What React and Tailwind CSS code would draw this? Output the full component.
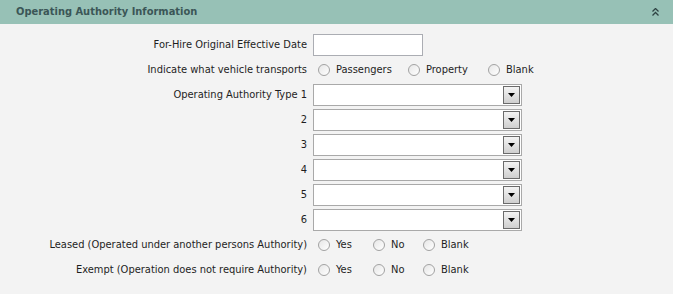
import React from 'react';

const Radio = ({ label, gap = 'w-[70px]' }) => (
    <label className={`flex items-center gap-[6px] ${gap}`}>
        <span className="w-[12px] h-[12px] rounded-full border border-[#a2a2a2] bg-gradient-to-br from-[#e6e6e6] to-white shrink-0"></span>
        <span>{label}</span>
    </label>
);

const Select = () => (
    <div className="w-[209px] h-[22px] border border-[#a9a9a9] bg-white flex items-center justify-end pr-[1px]">
        <div className="w-[17px] h-[18px] border border-[#6b6b6b] bg-gradient-to-b from-[#f4f4f4] to-[#cfcfcf] flex items-center justify-center">
            <svg width="7" height="4" viewBox="0 0 7 4">
                <path d="M0 0h7L3.5 4z" fill="#000" />
            </svg>
        </div>
    </div>
);

const Row = ({ label, children, inset = false }) => (
    <div className="flex items-center h-[22px]">
        <div className="w-[307px] text-right shrink-0 whitespace-nowrap">{label}</div>
        <div className={`flex items-center ${inset ? 'pl-[11px]' : 'pl-[6px]'}`}>{children}</div>
    </div>
);

export default function App() {
    return (
        <div className="w-[673px] h-[294px] bg-[#f3f3f3] text-[11px] text-[#1e1e1e]" style={{ fontFamily: '"DejaVu Sans Condensed", "DejaVu Sans", sans-serif' }}>
            {/* Section header */}
            <div className="h-[24px] bg-[#97c1b6] flex items-center justify-between pl-[16px] pr-[12px]">
                <span className="font-bold text-[#3b5656] text-[11px]">Operating Authority Information</span>
                <svg width="7" height="8" viewBox="0 0 7 8" className="mr-[2px]">
                    <path d="M0.5 3.5L3.5 0.5L6.5 3.5M0.5 7.5L3.5 4.5L6.5 7.5" fill="none" stroke="#2f4444" strokeWidth="1.3" />
                </svg>
            </div>

            <div className="pt-[10px] flex flex-col gap-[3px]">
                <Row label="For-Hire Original Effective Date">
                    <div className="w-[110px] h-[22px] border border-[#abadb3] bg-white"></div>
                </Row>
                <Row label="Indicate what vehicle transports" inset>
                    <Radio label="Passengers" gap="w-[90px]" />
                    <Radio label="Property" gap="w-[80px]" />
                    <Radio label="Blank" />
                </Row>
                <Row label="Operating Authority Type 1"><Select /></Row>
                <Row label="2"><Select /></Row>
                <Row label="3"><Select /></Row>
                <Row label="4"><Select /></Row>
                <Row label="5"><Select /></Row>
                <Row label="6"><Select /></Row>
                <Row label="Leased (Operated under another persons Authority)" inset>
                    <Radio label="Yes" gap="w-[55px]" />
                    <Radio label="No" gap="w-[50px]" />
                    <Radio label="Blank" />
                </Row>
                <Row label="Exempt (Operation does not require Authority)" inset>
                    <Radio label="Yes" gap="w-[55px]" />
                    <Radio label="No" gap="w-[50px]" />
                    <Radio label="Blank" />
                </Row>
            </div>
        </div>
    );
}
